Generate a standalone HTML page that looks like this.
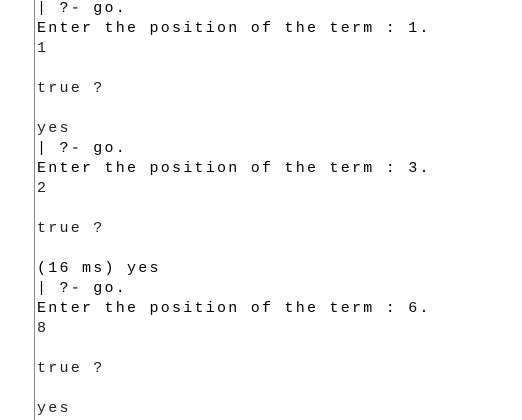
<!DOCTYPE html>
<html><head><style>
html,body{margin:0;padding:0;background:#fff;width:522px;height:420px;overflow:hidden;position:relative}
.b{position:absolute;left:34px;top:0;width:1px;height:420px;background:#8a8a8a}
.l{position:absolute;left:37px;height:20px;line-height:20px;white-space:pre;color:#000;font-family:"Liberation Mono",monospace;font-size:15px;letter-spacing:2.25px}
.s{color:#222}
</style></head><body>
<div class="b"></div>
<div class="l" style="top:-1px">| ?- go.</div>
<div class="l" style="top:19px">Enter the position of the term : 1.</div>
<div class="l s" style="top:39px">1</div>
<div class="l s" style="top:79px">true ?</div>
<div class="l s" style="top:119px">yes</div>
<div class="l" style="top:139px">| ?- go.</div>
<div class="l" style="top:159px">Enter the position of the term : 3.</div>
<div class="l s" style="top:179px">2</div>
<div class="l s" style="top:219px">true ?</div>
<div class="l" style="top:259px">(16 ms) yes</div>
<div class="l" style="top:279px">| ?- go.</div>
<div class="l" style="top:299px">Enter the position of the term : 6.</div>
<div class="l s" style="top:319px">8</div>
<div class="l s" style="top:359px">true ?</div>
<div class="l s" style="top:399px">yes</div>
</body></html>
